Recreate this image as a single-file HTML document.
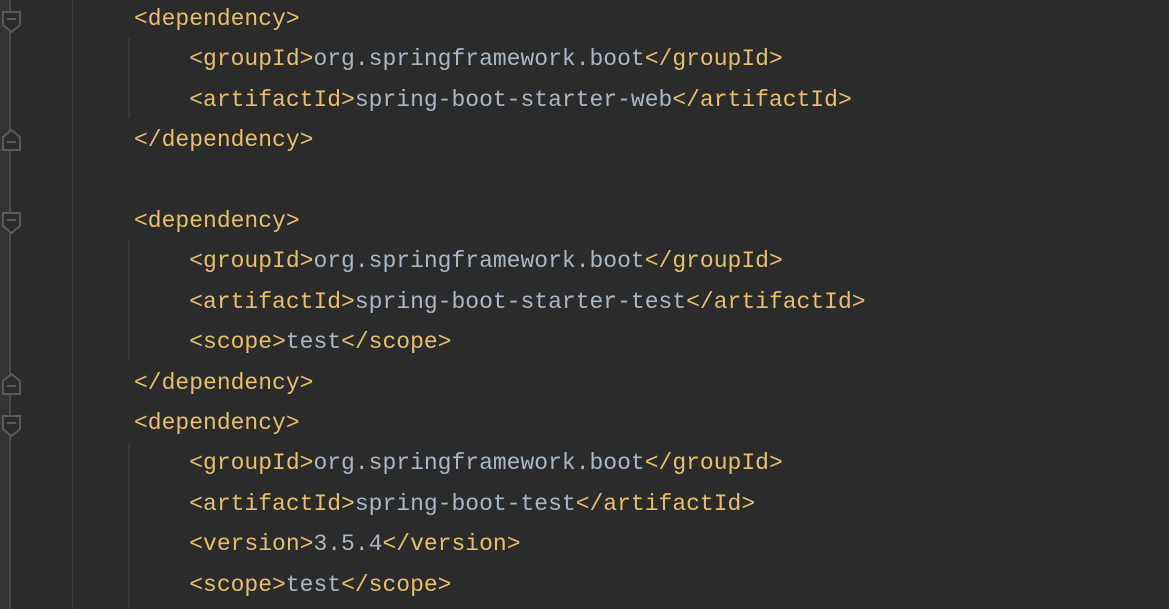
<!DOCTYPE html>
<html><head><style>
html,body{margin:0;padding:0;}
body{width:1169px;height:609px;background:#2b2b2b;position:relative;overflow:hidden;font-family:"Liberation Mono",monospace;}
.strip{position:absolute;left:0;top:0;width:10px;height:609px;background:#313335;}
.fl{position:absolute;left:9px;top:0;width:2px;height:609px;background:#4a4a4a;}
.sep{position:absolute;left:72px;top:0;width:1px;height:609px;background:#393939;}
.g{position:absolute;left:128px;width:2px;background:#373737;}
.code{position:absolute;left:134px;top:-1px;font-size:23px;line-height:40.4px;white-space:pre;color:#a9b7c6;}
.t{color:#e8bf6a;}
svg{position:absolute;left:1px;}
</style></head><body>
<div class="strip"></div><div class="fl"></div><div class="sep"></div>
<div class="g" style="top:38px;height:80px"></div>
<div class="g" style="top:240px;height:120px"></div>
<div class="g" style="top:443px;height:166px"></div>
<svg style="top:10px" width="20" height="24"><path d="M2 2H19V15L10.5 22L2 15Z" fill="#2b2b2b" stroke="#5a5a5a" stroke-width="2"/><path d="M6 9H15" stroke="#5a5a5a" stroke-width="2"/></svg>
<svg style="top:128px" width="20" height="24"><path d="M2 22H19V9L10.5 2L2 9Z" fill="#2b2b2b" stroke="#5a5a5a" stroke-width="2"/><path d="M6 14H15" stroke="#5a5a5a" stroke-width="2"/></svg>
<svg style="top:211px" width="20" height="24"><path d="M2 2H19V15L10.5 22L2 15Z" fill="#2b2b2b" stroke="#5a5a5a" stroke-width="2"/><path d="M6 9H15" stroke="#5a5a5a" stroke-width="2"/></svg>
<svg style="top:372px" width="20" height="24"><path d="M2 22H19V9L10.5 2L2 9Z" fill="#2b2b2b" stroke="#5a5a5a" stroke-width="2"/><path d="M6 14H15" stroke="#5a5a5a" stroke-width="2"/></svg>
<svg style="top:414px" width="20" height="24"><path d="M2 2H19V15L10.5 22L2 15Z" fill="#2b2b2b" stroke="#5a5a5a" stroke-width="2"/><path d="M6 9H15" stroke="#5a5a5a" stroke-width="2"/></svg>
<div class="code"><span class="t">&lt;dependency&gt;</span>
    <span class="t">&lt;groupId&gt;</span>org.springframework.boot<span class="t">&lt;/groupId&gt;</span>
    <span class="t">&lt;artifactId&gt;</span>spring-boot-starter-web<span class="t">&lt;/artifactId&gt;</span>
<span class="t">&lt;/dependency&gt;</span>

<span class="t">&lt;dependency&gt;</span>
    <span class="t">&lt;groupId&gt;</span>org.springframework.boot<span class="t">&lt;/groupId&gt;</span>
    <span class="t">&lt;artifactId&gt;</span>spring-boot-starter-test<span class="t">&lt;/artifactId&gt;</span>
    <span class="t">&lt;scope&gt;</span>test<span class="t">&lt;/scope&gt;</span>
<span class="t">&lt;/dependency&gt;</span>
<span class="t">&lt;dependency&gt;</span>
    <span class="t">&lt;groupId&gt;</span>org.springframework.boot<span class="t">&lt;/groupId&gt;</span>
    <span class="t">&lt;artifactId&gt;</span>spring-boot-test<span class="t">&lt;/artifactId&gt;</span>
    <span class="t">&lt;version&gt;</span>3.5.4<span class="t">&lt;/version&gt;</span>
    <span class="t">&lt;scope&gt;</span>test<span class="t">&lt;/scope&gt;</span>
</div>
</body></html>
